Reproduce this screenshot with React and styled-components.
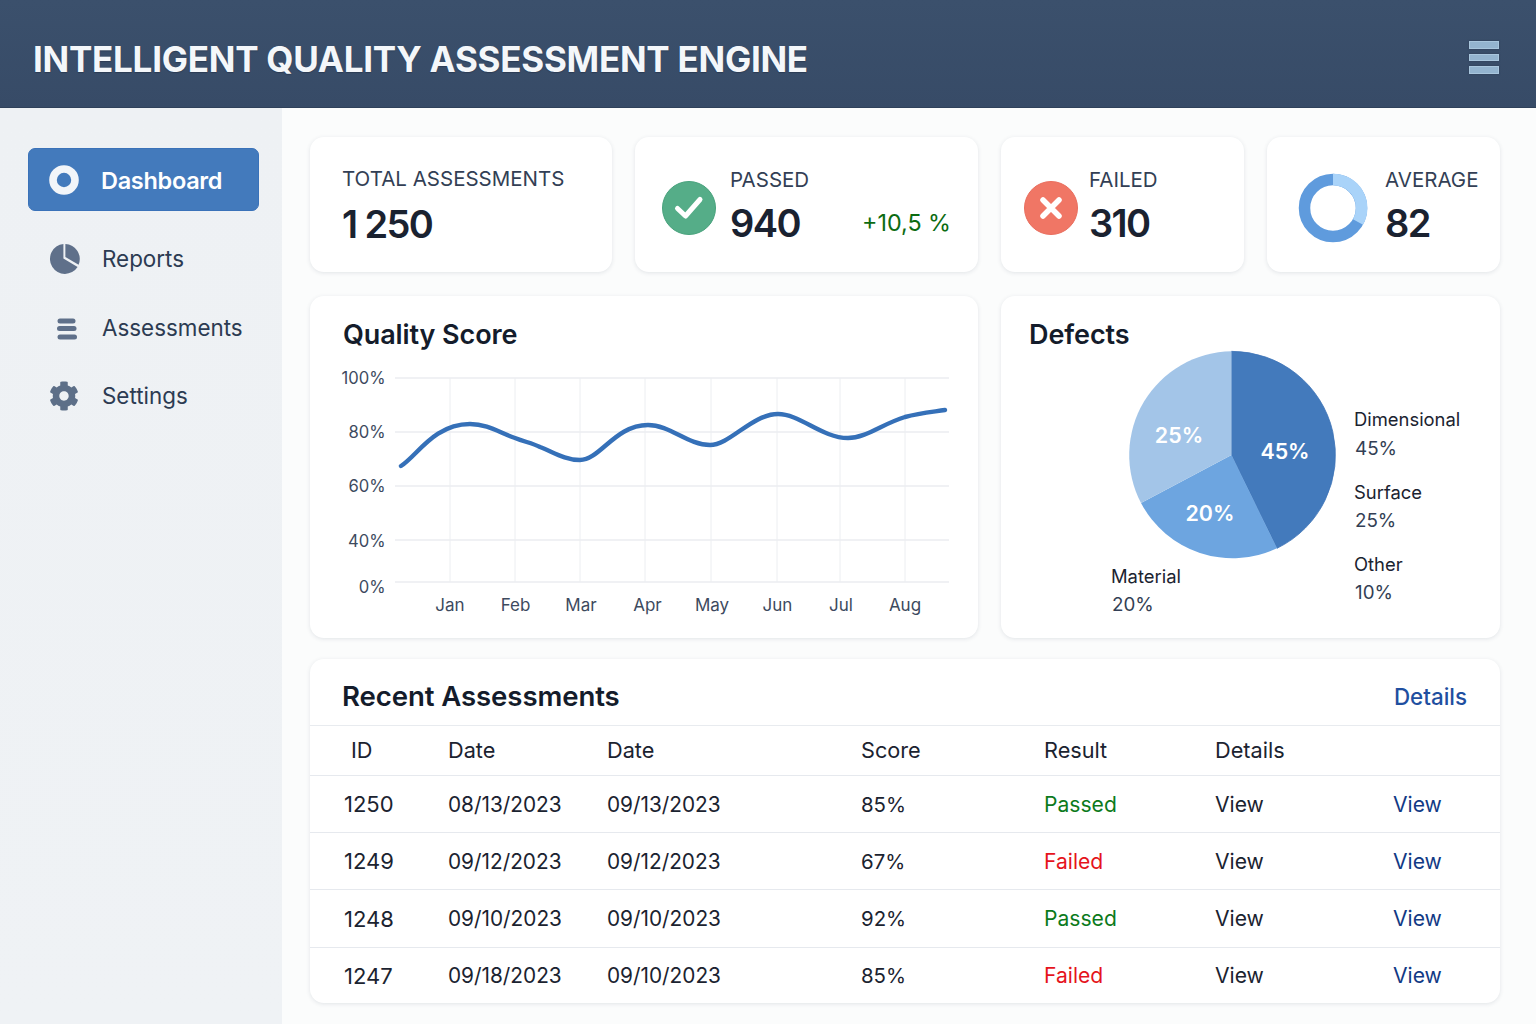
import React from 'react';
import styled, { createGlobalStyle } from 'styled-components';
import { FaCog } from 'react-icons/fa';

const Global = createGlobalStyle`
  html, body { margin: 0; padding: 0; height: 100%; background: #fbfcfc; }
  body { font-family: Inter, "Liberation Sans", sans-serif; color: #1b2433; overflow: hidden; }
  * { box-sizing: border-box; }
`;

const Page = styled.div`
  width: 1536px; height: 1024px; display: flex; flex-direction: column; overflow: hidden;
`;
const Header = styled.header`
  height: 108px; flex: none; display: flex; align-items: center; justify-content: space-between;
  padding: 10px 37px 0 33px;
  background: linear-gradient(180deg, #3b506c 0%, #374b67 100%);
  border-bottom: 1px solid #2f415a;
`;
const Title = styled.h1`
  margin: 0; font-size: 35px; font-weight: 700; color: #f4f7fa; letter-spacing: -0.26px; white-space: nowrap;
  text-shadow: 0 1px 1px rgba(20, 30, 45, 0.35);
`;
const Burger = styled.div`
  width: 30px; display: flex; flex-direction: column; gap: 5px; margin-top: -2px;
  span { display: block; height: 7.5px; background: #94b4cf; border: 1px solid #a9c6dd; box-shadow: 0 0 2px #2a3a52; }
`;
const Body = styled.div`
  flex: 1; display: flex; min-height: 0;
`;
const Sidebar = styled.nav`
  width: 282px; flex: none; background: linear-gradient(180deg, #eef1f4 0%, #eff2f5 100%);
  padding: 40px 23px 0 28px; display: flex; flex-direction: column;
`;
const NavItem = styled.div`
  display: flex; align-items: center; height: ${p => p.$active ? 63 : 68.5}px;
  margin-bottom: ${p => p.$active ? 13.5 : 0}px;
  padding-left: ${p => p.$active ? 19 : 20}px; gap: ${p => p.$active ? 21 : 22}px; border-radius: 7px;
  font-size: ${p => p.$active ? 23.5 : 22.4}px; font-weight: ${p => p.$active ? 600 : 400};
  letter-spacing: ${p => p.$active ? -0.3 : 0}px;
  color: ${p => p.$active ? '#fff' : '#2c3b52'};
  background: ${p => p.$active ? '#437abc' : 'transparent'};
  border: ${p => p.$active ? '1px solid #3a72b9' : 'none'};
`;
const NavLabel = styled.span`
  padding-top: ${p => p.$active ? 1 : 0}px;
`;
const NavIcon = styled.span`
  width: 32px; height: 32px; flex: none; display: flex; align-items: center; justify-content: center; color: #5d6f88;
`;
const Main = styled.main`
  flex: 1; padding: 29px 36px 0 28px; display: flex; flex-direction: column;
`;
const Card = styled.section`
  background: #fff; border-radius: 14px; box-shadow: 0 1px 4px rgba(40, 55, 80, 0.12);
`;
const StatRow = styled.div`
  display: grid; grid-template-columns: 302px 343px 243px 233px; gap: 23px; height: 135px;
`;
const StatCard = styled(Card)`
  display: flex; align-items: center; gap: ${p => p.$gap}px; padding-left: ${p => p.$pl}px; padding-top: 6px; position: relative;
`;
const StatText = styled.div`
  display: flex; flex-direction: column; padding-bottom: 2px;
`;
const StatLabel = styled.div`
  font-size: 20.5px; line-height: 26px; color: #333f55; white-space: nowrap; margin-top: -1px;
`;
const StatValue = styled.div`
  font-size: 38px; line-height: 46px; font-weight: 600; color: #1a2230; margin-top: ${p => p.$mt}px; white-space: nowrap; letter-spacing: -1.6px;
`;
const Trend = styled.div`
  margin-left: auto; margin-right: 27px; align-self: flex-start; margin-top: 65px; font-size: 23.3px; color: #0c6b12; white-space: nowrap;
`;
const ChartRow = styled.div`
  display: grid; grid-template-columns: 668px 499px; gap: 23px; height: 342px; margin-top: 24px;
`;
const ChartCard = styled(Card)`
  position: relative; overflow: hidden;
`;
const ChartTitle = styled.h2`
  position: relative; z-index: 1; margin: 0; padding: ${p => `22px 0 0 ${p.$pl}px`}; font-size: 27px; line-height: 34px; font-weight: 600; color: #141c2b; letter-spacing: -0.1px;
`;
const ChartSvg = styled.svg`
  position: absolute; left: 0; top: 0; width: 100%; height: 100%;
  text { font-family: Inter, "Liberation Sans", sans-serif; }
`;
const TableCard = styled(Card)`
  margin-top: 21px; height: 344px; overflow: hidden;
`;
const TableHead = styled.div`
  height: 67px; display: flex; align-items: center; justify-content: space-between; padding: 8px 33px 0 32px; border-bottom: 1px solid #e8ebef;
`;
const TableTitle = styled.h2`
  margin: 0; font-size: 27.6px; font-weight: 600; color: #141c2b; letter-spacing: -0.1px;
`;
const DetailsLink = styled.a`
  font-size: 22.4px; font-weight: 500; color: #1f4fa0;
`;
const Row = styled.div`
  display: grid; grid-template-columns: 104px 159px 254px 183px 171px 178px 1fr;
  align-items: center; padding-left: 34px; height: ${p => p.$h}px; font-size: 21.1px;
  color: #1b2330; border-bottom: ${p => p.$last ? 'none' : '1px solid #e6e9ee'};
`;
const HeadCell = styled.div`
  padding-left: ${p => p.$pl || 0}px; font-size: 21.7px; margin-top: -1px;
`;
const Cell = styled.div`
  white-space: nowrap; font-size: ${p => p.$size || 21.1}px;
`;
const Result = styled.div`
  color: ${p => p.$ok ? '#0c7a1c' : '#e5141c'};
`;
const ViewLink = styled.a`
  color: #123a85;
`;

const RingIcon = () => (
  <svg width="32" height="32" viewBox="0 0 32 32"><circle cx="16" cy="16" r="11" fill="none" stroke="#f2f5f9" strokeWidth="7.6" /></svg>
);
const PieIcon = () => (
  <svg width="32" height="32" viewBox="0 0 32 32">
    <path d="M15.4 1 A15 15 0 1 0 29.6 24 L15.4 15.4 Z" fill="#5f708a" />
    <path d="M17.4 1 A15 15 0 0 1 30.6 21.8 L17.4 14 Z" fill="#5f708a" />
  </svg>
);
const ListIcon = () => (
  <svg width="32" height="32" viewBox="0 0 32 32" fill="#5f708a">
    <rect x="9.5" y="7.5" width="18" height="5" rx="2.5" />
    <rect x="9" y="15" width="19.5" height="5" rx="2.5" />
    <rect x="9.5" y="23.5" width="19.5" height="5" rx="2.5" />
  </svg>
);
const CheckBadge = () => (
  <svg width="54" height="54" viewBox="0 0 54 54">
    <circle cx="27" cy="27" r="26.5" fill="#55ad88" stroke="#48a27c" />
    <path d="M15.5 27.5 L23.5 35 L38 18.5" fill="none" stroke="#fff" strokeWidth="5" strokeLinecap="round" strokeLinejoin="round" />
  </svg>
);
const CrossBadge = () => (
  <svg width="54" height="54" viewBox="0 0 54 54">
    <circle cx="27" cy="27" r="26.5" fill="#f07665" stroke="#e96e5e" />
    <path d="M19 19 L35 35 M35 19 L19 35" fill="none" stroke="#fff" strokeWidth="5.5" strokeLinecap="round" />
  </svg>
);
const Donut = () => (
  <svg width="70" height="70" viewBox="0 0 70 70">
    <circle cx="35" cy="35" r="28.5" fill="none" stroke="#5f9bdd" strokeWidth="11.5" />
    <path d="M35 6.5 A28.5 28.5 0 0 1 60 49" fill="none" stroke="#a9d3f9" strokeWidth="11.5" />
  </svg>
);

const yTicks = [['100%', 82, 83], ['80%', 136, 137], ['60%', 190, 191], ['40%', 244, 246], ['0%', 286, 292]];
const xTicks = [['Jan', 140, 140], ['Feb', 205, 205.5], ['Mar', 270, 271], ['Apr', 335, 337.5], ['May', 401, 402], ['Jun', 467, 467.5], ['Jul', 530, 531], ['Aug', 595, 595]];

const QualityChart = () => (
  <ChartSvg viewBox="0 0 668 342">
    {yTicks.map(([label, y, ty]) => (
      <g key={label}>
        <line x1="85" x2="639" y1={y} y2={y} stroke="#ebedf0" strokeWidth="1.3" />
        <text x="75.5" y={ty + 5} textAnchor="end" fontSize="16.6" fill="#3d4a5e">{label}</text>
      </g>
    ))}
    {xTicks.map(([label, x, tx]) => (
      <g key={label}>
        <line x1={x} x2={x} y1="82" y2="286" stroke="#eceef1" strokeWidth="1" />
        <text x={tx} y="315" textAnchor="middle" fontSize="17" fill="#3d4a5e">{label}</text>
      </g>
    ))}
    <path
      d="M91 170 C107 160 124 128 160 128 C178 128 190 137 205 142 C215 146 222 147 230 151 C243 156 255 164 270 164 C290 164 305 129 338 129 C360 129 378 149 400 149 C420 149 442 118 468 118 C490 118 512 142 538 142 C556 142 572 128 595 121 C610 117 622 116 635 114"
      fill="none" stroke="#3570b8" strokeWidth="4.4" strokeLinecap="round"
    />
  </ChartSvg>
);

const legend = [
  ['Dimensional', '45%', 353, 130, 159],
  ['Surface', '25%', 353, 203, 231],
  ['Other', '10%', 353, 275, 303],
  ['Material', '20%', 110, 287, 315],
];

const DefectsChart = () => (
  <ChartSvg viewBox="0 0 499 342">
    <path d="M230.5 159 L230.5 55.3 A103.7 103.7 0 0 1 276 252.3 Z" fill="#437abc" stroke="#3d74b8" strokeWidth="0.8" />
    <path d="M230.5 159 L276 252.3 A103.7 103.7 0 0 1 140 207 Z" fill="#6da5e0" />
    <path d="M230.5 159 L140 207 A103.7 103.7 0 0 1 230.5 55.3 Z" fill="#a3c5e8" />
    <g fill="#fff" fontSize="21.4" fontWeight="600" textAnchor="middle">
      <text x="284" y="163">45%</text>
      <text x="178" y="147">25%</text>
      <text x="209" y="225">20%</text>
    </g>
    {legend.map(([name, pct, x, y1, y2]) => (
      <g key={name}>
        <text x={x} y={y1} fill="#1b2330" fontSize="18.4">{name}</text>
        <text x={x + 1} y={y2} fill="#333f55" fontSize="18.8">{pct}</text>
      </g>
    ))}
  </ChartSvg>
);

const rows = [
  ['1250', '08/13/2023', '09/13/2023', '85%', 'Passed', 57],
  ['1249', '09/12/2023', '09/12/2023', '67%', 'Failed', 57],
  ['1248', '09/10/2023', '09/10/2023', '92%', 'Passed', 58],
  ['1247', '09/18/2023', '09/10/2023', '85%', 'Failed', 55],
];

export default function App() {
  return (
    <Page>
      <Global />
      <Header>
        <Title>INTELLIGENT QUALITY ASSESSMENT ENGINE</Title>
        <Burger><span /><span /><span /></Burger>
      </Header>
      <Body>
        <Sidebar>
          <NavItem $active><NavIcon><RingIcon /></NavIcon><NavLabel $active>Dashboard</NavLabel></NavItem>
          <NavItem><NavIcon><PieIcon /></NavIcon><NavLabel>Reports</NavLabel></NavItem>
          <NavItem><NavIcon><ListIcon /></NavIcon><NavLabel>Assessments</NavLabel></NavItem>
          <NavItem><NavIcon><FaCog size={30} /></NavIcon><NavLabel>Settings</NavLabel></NavItem>
        </Sidebar>
        <Main>
          <StatRow>
            <StatCard $pl={32} $gap={0}>
              <StatText>
                <StatLabel>TOTAL ASSESSMENTS</StatLabel>
                <StatValue $mt={9}>1 250</StatValue>
              </StatText>
            </StatCard>
            <StatCard $pl={27} $gap={14}>
              <CheckBadge />
              <StatText>
                <StatLabel>PASSED</StatLabel>
                <StatValue $mt={7}>940</StatValue>
              </StatText>
              <Trend>+10,5 %</Trend>
            </StatCard>
            <StatCard $pl={23} $gap={11}>
              <CrossBadge />
              <StatText>
                <StatLabel>FAILED</StatLabel>
                <StatValue $mt={7}>310</StatValue>
              </StatText>
            </StatCard>
            <StatCard $pl={31} $gap={17}>
              <Donut />
              <StatText>
                <StatLabel>AVERAGE</StatLabel>
                <StatValue $mt={7}>82</StatValue>
              </StatText>
            </StatCard>
          </StatRow>
          <ChartRow>
            <ChartCard>
              <ChartTitle $pl={33}>Quality Score</ChartTitle>
              <QualityChart />
            </ChartCard>
            <ChartCard>
              <ChartTitle $pl={28}>Defects</ChartTitle>
              <DefectsChart />
            </ChartCard>
          </ChartRow>
          <TableCard>
            <TableHead>
              <TableTitle>Recent Assessments</TableTitle>
              <DetailsLink>Details</DetailsLink>
            </TableHead>
            <Row $h={50}>
              <HeadCell $pl={7}>ID</HeadCell>
              <HeadCell>Date</HeadCell>
              <HeadCell>Date</HeadCell>
              <HeadCell>Score</HeadCell>
              <HeadCell>Result</HeadCell>
              <HeadCell>Details</HeadCell>
              <HeadCell />
            </Row>
            {rows.map(([id, d1, d2, score, res, h], i) => (
              <Row key={id} $h={h} $last={i === rows.length - 1}>
                <Cell $size={22}>{id}</Cell>
                <Cell $size={20.8}>{d1}</Cell>
                <Cell $size={20.8}>{d2}</Cell>
                <Cell $size={20.4}>{score}</Cell>
                <Result $ok={res === 'Passed'}>{res}</Result>
                <Cell>View</Cell>
                <ViewLink>View</ViewLink>
              </Row>
            ))}
          </TableCard>
        </Main>
      </Body>
    </Page>
  );
}
